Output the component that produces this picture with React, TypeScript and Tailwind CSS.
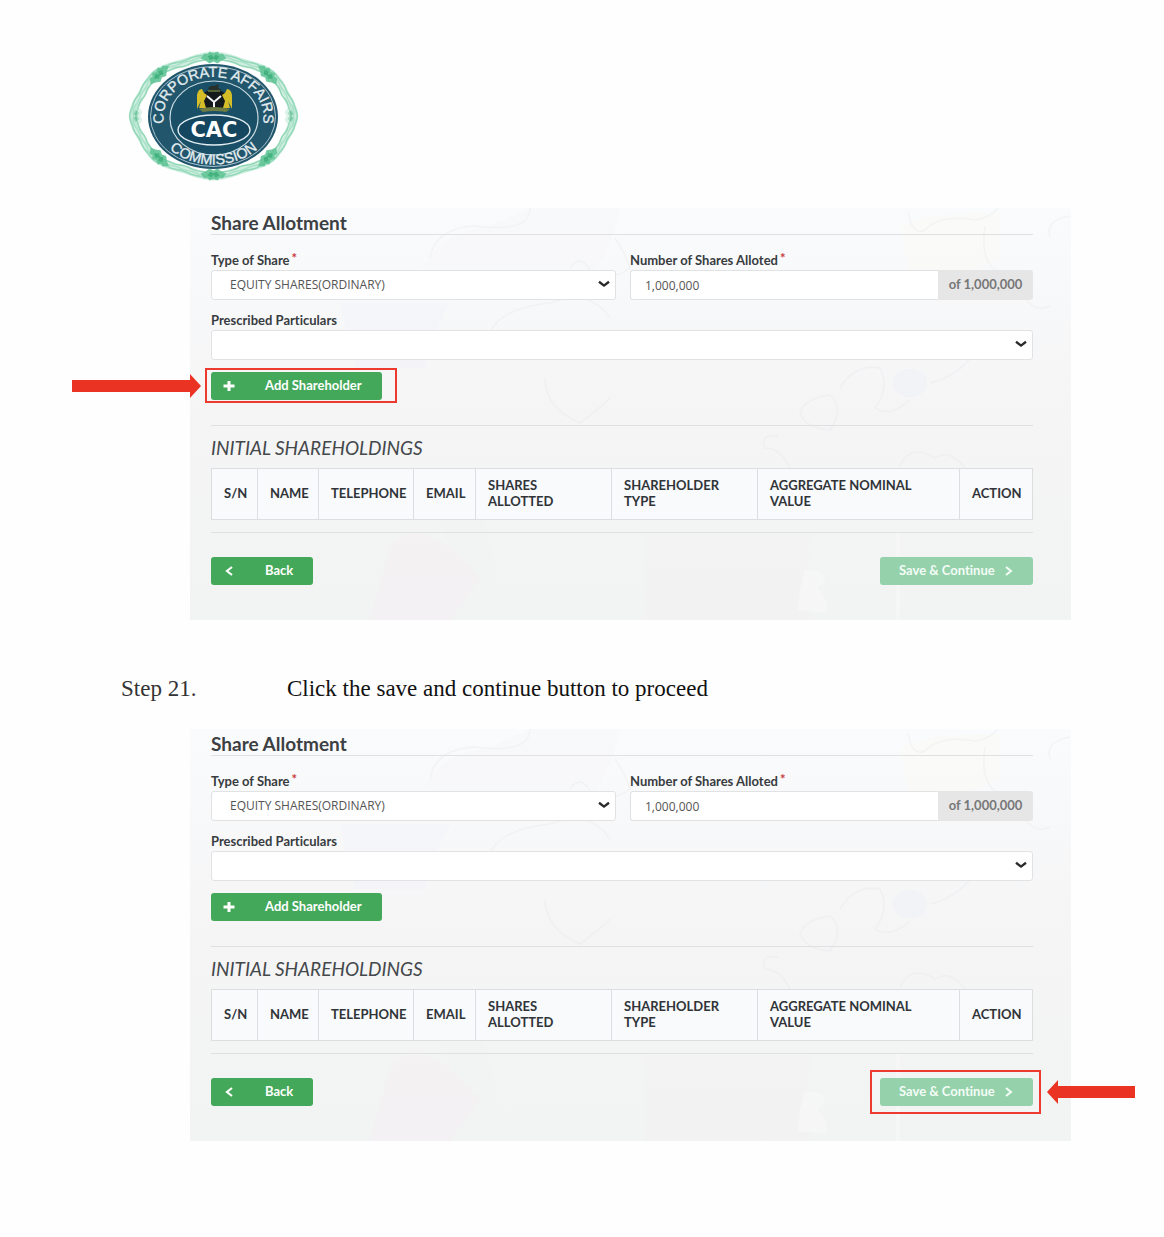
import React, { useId } from "react";

type Highlight = "add" | "save" | null;

const columns = [
  { label: "S/N", width: "w-[46px]" },
  { label: "NAME", width: "w-[61px]" },
  { label: "TELEPHONE", width: "w-[95px]" },
  { label: "EMAIL", width: "w-[62px]" },
  { label: "SHARES ALLOTTED", width: "w-[136px]" },
  { label: "SHAREHOLDER TYPE", width: "w-[146px]" },
  { label: "AGGREGATE NOMINAL VALUE", width: "w-[202px]" },
  { label: "ACTION", width: "w-[73px]" },
];

const ROSETTES = Array.from({ length: 8 }, (_, i) => (i * Math.PI) / 4 + Math.PI / 2);

function scallopRing(rx: number, ry: number, ripple: number) {
  let d = "";
  for (let i = 0; i <= 240; i++) {
    const a = (i / 240) * Math.PI * 2;
    const w = 1.4 * Math.cos(a * 8) + ripple * Math.cos(a * 24);
    const x = 85.5 + (rx + w) * Math.cos(a);
    const y = 65 + (ry + w) * Math.sin(a);
    d += `${i ? "L" : "M"}${x.toFixed(1)} ${y.toFixed(1)}`;
  }
  return d + "Z";
}

function Logo() {
  return (
    <svg
      width="171"
      height="130"
      viewBox="0 0 171 130"
      role="img"
      aria-label="Corporate Affairs Commission"
    >
      <path d={scallopRing(79, 59, 0)} fill="#fff" stroke="#cdeedf" strokeWidth="8" />
      <g fill="none">
        <path d={scallopRing(82, 61, 0.4)} stroke="#93d9b9" strokeWidth="1.6" />
        <path d={scallopRing(79, 59, -0.5)} stroke="#a9e0c8" strokeWidth="1.4" />
        <path d={scallopRing(76, 56, 0.5)} stroke="#8fd4b3" strokeWidth="1.3" />
      </g>
      {ROSETTES.map((a) => (
        <g
          key={a}
          transform={`translate(${85.5 + 77 * Math.cos(a)} ${65 + 58.5 * Math.sin(a)}) rotate(${(a * 180) / Math.PI + 90})`}
          fill={Math.abs(Math.cos(a)) > 0.9 ? "#a9e2c9" : "#62c597"}
          opacity={Math.abs(Math.cos(a)) > 0.9 ? 0.4 : 0.9}
        >
          <path d="M-13 1L-9-4L-6-3L-4-6L0-4L4-6L6-3L9-4L13 1L8 3L4 6L0 4L-4 6L-8 3Z" />
          <path d="M-6-1L-2-3L0 0L2-3L6-1L3 3L0 1L-3 3Z" fill="#3aad78" />
        </g>
      ))}
      <ellipse cx="85" cy="65.5" rx="65" ry="52.5" fill="#22566d" />
      <ellipse cx="85" cy="65.5" rx="62.5" ry="50" fill="none" stroke="#a9c4cd" strokeWidth="1" />
      <ellipse cx="86" cy="67" rx="44" ry="37" fill="#1a4f68" stroke="#c9dbe0" strokeWidth="1.2" />
      <defs>
        <path id="ring-top" d="M37.200 75.700A50 39.500 0 1 1 133.800 75.700" />
        <path id="ring-bottom" d="M25.500 65.500A60 48 0 0 0 145.500 65.500" />
      </defs>
      <g fill="#e3edf0" stroke="#e3edf0" strokeWidth="0.3" fontFamily="'Liberation Sans', sans-serif" fontSize="14.500">
        <text textAnchor="middle">
          <textPath href="#ring-top" startOffset="50%">
            CORPORATE AFFAIRS
          </textPath>
        </text>
        <text textAnchor="middle">
          <textPath href="#ring-bottom" startOffset="50%">
            COMMISSION
          </textPath>
        </text>
      </g>
      <path d="M74 46Q75 39 86 39Q97 39 99 46L95 57Q86 63 77 57Z" fill="#14191b" />
      <path d="M79 45L86 51L93 45M86 51V60" fill="none" stroke="#f4f4f4" strokeWidth="2" />
      <path d="M80 38Q82 34 86 35L91 33L90 37L94 39L86 41Z" fill="#27302a" />
      <path d="M80 40H92" stroke="#65793b" strokeWidth="1.5" />
      <path d="M69 44Q70 38 74 38L76 42L79 44L76 50L78 57H71L73 50L69 58Z" fill="#d5bd27" />
      <path d="M104 44Q103 38 99 38L97 42L94 44L97 50L95 57H102L100 50L104 58Z" fill="#d5bd27" />
      <path d="M71 58Q86 54 102 58L98 61Q86 59 75 61Z" fill="#6e7c43" />
      <ellipse cx="86" cy="79" rx="36" ry="15" fill="#154660" stroke="#e2edf0" strokeWidth="1.4" />
      <text
        x="86"
        y="86"
        textAnchor="middle"
        fill="#fff"
        fontFamily="'DejaVu Sans', sans-serif"
        fontWeight="700"
        fontSize="21"
      >
        CAC
      </text>
    </svg>
  );
}

function MapBackground() {
  return (
    <svg
      className="absolute inset-0 h-full w-full opacity-50"
      viewBox="0 0 881 412"
      preserveAspectRatio="none"
      aria-hidden="true"
    >
      <path d="M240 50Q250 28 300 18L340 0H430Q420 45 400 70L320 75L230 60Z" fill="#f6f7fa" opacity=".6" />
      <path d="M150 95H260Q240 130 235 160H165Z" fill="#f2f4fb" opacity=".7" />
      <path d="M710 20Q730 5 810 5V50Q770 70 720 65Z" fill="#fbfaf4" opacity=".6" />
      <path d="M245 310L290 300Q305 340 305 380Q285 375 270 350Z" fill="#f0f5f2" opacity=".8" />
      <path d="M200 340Q230 300 290 370L260 412H180Z" fill="#f5f0f2" opacity=".7" />
      <path d="M455 325H620V412H455Z" fill="#f5f1f3" opacity=".6" />
      <path d="M615 362Q635 362 635 372L628 380Q640 395 636 405L608 402L610 382Z" fill="#fafafa" />
      <ellipse cx="720" cy="175" rx="17" ry="14" fill="#eff1f8" />
      <g fill="none" stroke="#e6e7ea" strokeWidth="1.5" opacity=".6">
        <path d="M240 50Q245 20 285 18Q340 25 340 0M380 60Q390 45 400 62Q420 75 440 60Q435 45 425 30" />
        <path d="M300 125Q310 100 360 95Q400 80 420 110M718 4Q722 28 735 22Q750 6 785 12Q800 10 808 0" />
        <path d="M795 18Q790 50 805 62Q830 65 835 90Q845 105 860 98M860 30Q855 12 880 8" />
        <path d="M355 170Q355 200 390 215Q410 200 420 190M650 180Q665 155 690 160Q700 180 685 200Q700 210 720 192" />
        <path d="M610 205Q615 190 640 187Q655 200 640 222Q615 220 610 205M740 175Q765 170 785 145" />
        <path d="M600 260Q590 240 575 240Q570 225 588 228M710 258Q720 235 745 250Q760 240 775 260" />
      </g>
      <path d="M708 325V412" stroke="#f9f9f9" strokeWidth="4" />
    </svg>
  );
}

function SelectArrow() {
  return (
    <svg
      className="pointer-events-none absolute top-2.5 right-1.5 h-2 w-3"
      viewBox="0 0 12 8"
      fill="none"
      stroke="#2b2b2b"
      strokeWidth="2.4"
      aria-hidden="true"
    >
      <path d="M1 1.800L6 5.600L11 1.800" />
    </svg>
  );
}

function Label({ id, text, required }: { id: string; text: string; required?: boolean }) {
  return (
    <label htmlFor={id} className="block h-5 text-[13px] leading-5 font-bold text-[#383c3f]">
      {text}
      {required && <span className="relative -top-0.5 ml-0.5 text-[#c9393c]">*</span>}
    </label>
  );
}

function Arrow({ left }: { left?: boolean }) {
  return left ? (
    <svg className="absolute top-1/2 left-full ml-2 h-6 w-[88px] -translate-y-1/2" viewBox="0 0 88 24" aria-hidden="true">
      <path d="M0 12L11 0V6H88V18H11V24Z" fill="#eb3323" />
    </svg>
  ) : (
    <svg className="absolute top-1/2 right-full mr-1.5 h-6 w-[129px] -translate-y-1/2" viewBox="0 0 129 24" aria-hidden="true">
      <path d="M129 12L118 0V6H0V18H118V24Z" fill="#eb3323" />
    </svg>
  );
}

function SharePanel({ highlight }: { highlight: Highlight }) {
  const id = useId();
  const control = "h-[30px] w-full rounded-[3px] border border-[#e1e2e4] bg-white font-['Open_Sans',sans-serif] text-[12px] text-[#555]";
  const button = "flex h-7 items-center rounded-[3px] text-[13px] font-bold";

  return (
    <section className="relative mr-[93px] ml-[190px] bg-linear-to-b from-[#fafbfc] via-[#f5f5f6] to-[#f2f3f3] pr-[38px] pb-[35px] pl-[21px] font-['Lato',sans-serif] [font-variant-ligatures:none]">
      <MapBackground />
      <div className="relative pt-1">
        <h2 className="h-[23px] border-b border-[#e0e1e3] text-[19px] leading-[22px] font-bold text-[#3c4043]">
          Share Allotment
        </h2>

        <div className="mt-[15px] flex gap-3.5">
          <div className="w-[405px]">
            <Label id={`${id}-type`} text="Type of Share" required />
            <div className="relative">
              <select id={`${id}-type`} className={`${control} appearance-none pl-[18px]`}>
                <option>EQUITY SHARES(ORDINARY)</option>
              </select>
              <SelectArrow />
            </div>
          </div>
          <div className="flex-1">
            <Label id={`${id}-count`} text="Number of Shares Alloted" required />
            <div className="flex">
              <input
                id={`${id}-count`}
                className={`${control} min-w-0 flex-1 rounded-r-none border-r-0 pl-3.5`}
                defaultValue="1,000,000"
              />
              <span className="flex h-[30px] w-[95px] items-center justify-center rounded-r-[3px] bg-[#e6e6e7] text-[13px] font-bold text-[#777]">
                of 1,000,000
              </span>
            </div>
          </div>
        </div>

        <div className="mt-2.5">
          <Label id={`${id}-particulars`} text="Prescribed Particulars" />
          <div className="relative">
            <select id={`${id}-particulars`} className={`${control} appearance-none pl-[18px]`}>
              <option></option>
            </select>
            <SelectArrow />
          </div>
        </div>

        <div className="relative mt-3 w-[171px]">
          <button type="button" className={`${button} w-full bg-[#43a85a] pl-3 text-white`}>
            <svg className="h-3 w-3" viewBox="0 0 12 12" stroke="currentColor" strokeWidth="3" aria-hidden="true">
              <path d="M6 1V11M0.500 6H11.500" />
            </svg>
            <span className="ml-[30px]">Add Shareholder</span>
          </button>
          {highlight === "add" && (
            <div className="absolute -top-1 -right-[15px] -bottom-[3px] -left-1.5 border-2 border-[#ec3b2e]">
              <Arrow />
            </div>
          )}
        </div>

        <hr className="mt-[25px] border-[#dfe0e1]" />
        <h3 className="mt-[11px] text-[19px] leading-[22px] text-[#44484b] italic">INITIAL SHAREHOLDINGS</h3>
        <table className="mt-[9px] h-[52px] w-full table-fixed border-collapse bg-[#f8fafc]">
          <thead>
            <tr>
              {columns.map(({ label, width }) => (
                <th
                  key={label}
                  scope="col"
                  className={`${width} border border-[#dcdee1] px-3 pb-0.5 text-left text-[13px] leading-4 font-bold text-[#303438]`}
                >
                  {label}
                </th>
              ))}
            </tr>
          </thead>
        </table>
        <hr className="mt-3 border-[#dfe0e1]" />

        <div className="mt-6 flex justify-between">
          <button type="button" className={`${button} w-[102px] bg-[#43a85a] pl-3.5 text-white`}>
            <svg className="h-2.5 w-2" viewBox="0 0 8 10" fill="none" stroke="currentColor" strokeWidth="2.2" aria-hidden="true">
              <path d="M7 1L2 5L7 9" />
            </svg>
            <span className="ml-8">Back</span>
          </button>
          <div className="relative w-[153px]">
            <button type="button" className={`${button} w-full bg-[#95d2ac] pl-[19px] text-[#f4fcf6]`}>
              Save &amp; Continue
              <svg className="ml-2.5 h-2.5 w-2" viewBox="0 0 8 10" fill="none" stroke="currentColor" strokeWidth="2" aria-hidden="true">
                <path d="M1 1L6 5L1 9" />
              </svg>
            </button>
            {highlight === "save" && (
              <div className="absolute -top-2 -right-2 -bottom-2 -left-2.5 border-2 border-[#ec3b2e]">
                <Arrow left />
              </div>
            )}
          </div>
        </div>
      </div>
    </section>
  );
}

export default function App() {
  return (
    <main className="min-h-screen bg-[#fefefe] pt-[51px] pb-24">
      <header className="mb-[27px] ml-32 h-[130px]">
        <Logo />
      </header>
      <SharePanel highlight="add" />
      <div className="mt-[54px] mb-[26px] ml-[121px] flex items-center font-['Liberation_Serif',serif] text-[23px] leading-[29px] text-[#111]">
        <span className="w-[166px] text-[#333]">Step 21.</span>
        <p>Click the save and continue button to proceed</p>
      </div>
      <SharePanel highlight="save" />
    </main>
  );
}
